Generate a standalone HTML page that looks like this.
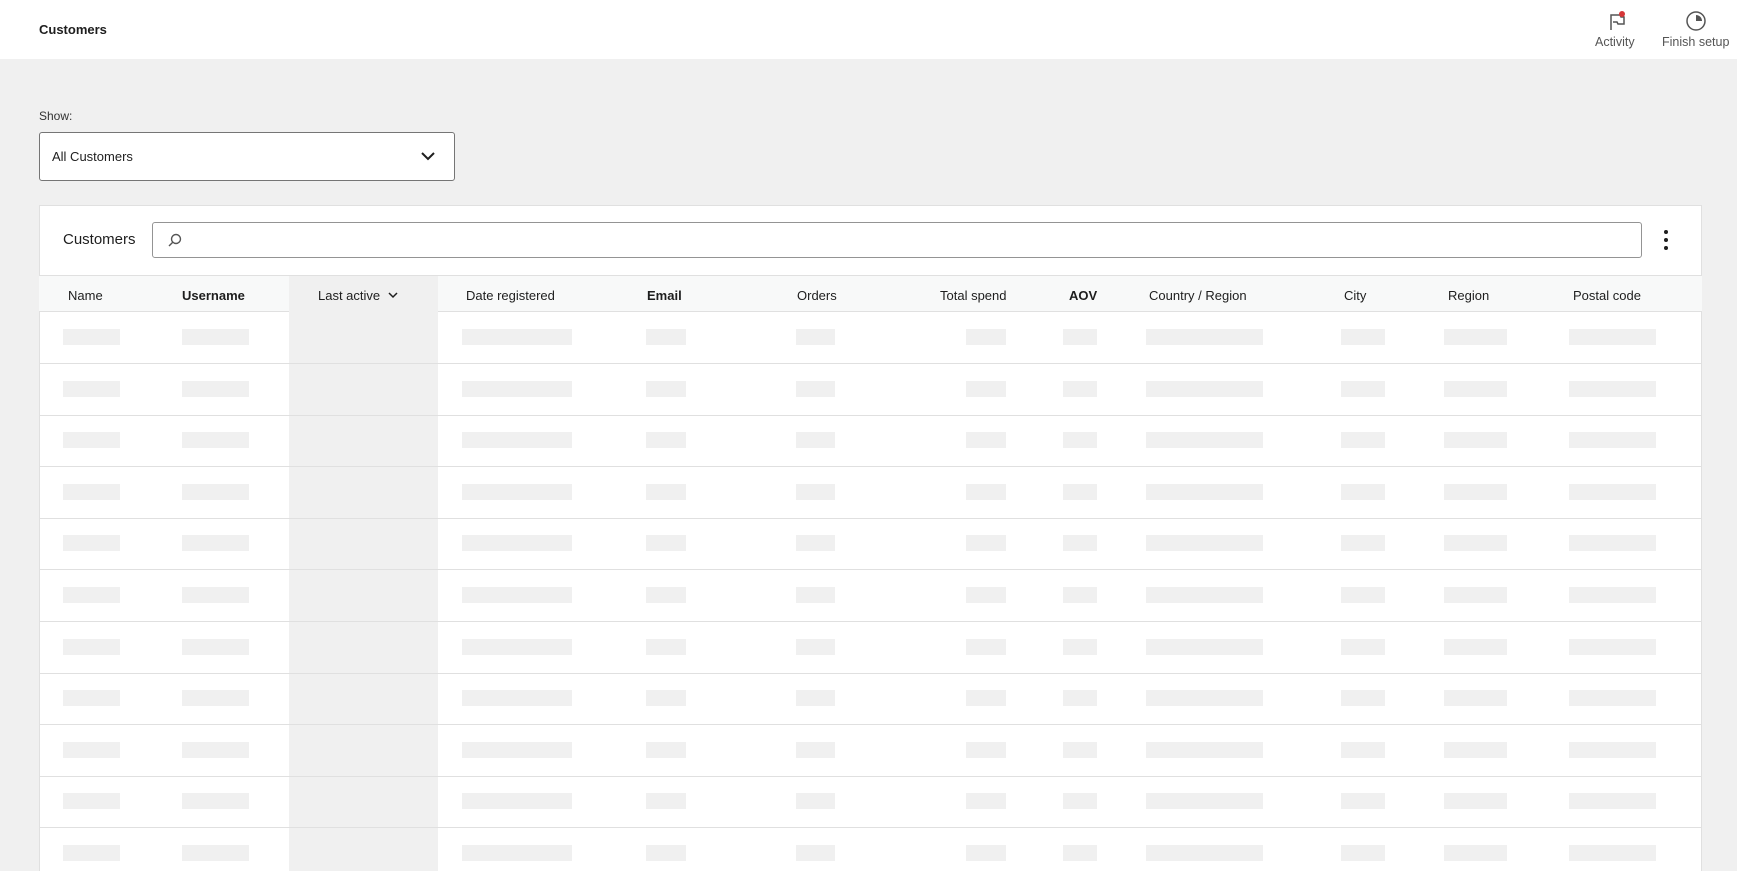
<!DOCTYPE html>
<html style="width:1737px;height:871px;overflow:hidden"><head><style>
*{margin:0;padding:0;box-sizing:border-box}
body{width:1737px;height:871px;overflow:hidden;background:#f0f0f0;font-family:"Liberation Sans",sans-serif;color:#1e1e1e;position:relative}
.top{position:absolute;left:0;top:0;width:1737px;height:59px;background:#fff}
.abs{position:absolute}
.t{font-size:13px;white-space:nowrap}
.card{position:absolute;left:39px;top:205px;width:1663px;height:666px;background:#fff;border:1px solid #e0e0e0;border-bottom:none}
.hdr{position:absolute;left:39px;top:275px;width:1663px;height:37px;background:#f8f9f9;border-top:1px solid #e0e0e0;border-bottom:1px solid #e0e0e0}
.la{position:absolute;left:289px;top:276px;width:149px;height:595px;background:#f0f0f0}
.row{position:absolute;left:40px;width:1661px;height:52px;border-bottom:1px solid #e0e0e0}
.row i{position:absolute;top:17px;height:16px;background:#f0f0f0}
.h{position:absolute;top:288px;font-size:13px;color:#1e1e1e;white-space:nowrap}
.b{font-weight:bold}
</style></head><body>
<div class="top"></div>
<div class="abs t" style="left:39px;top:22px;font-weight:bold;font-size:13px">Customers</div>
<svg class="abs" style="left:1605px;top:10px" width="24" height="24" viewBox="0 0 24 24"><path d="M6 20V5h9l1 2h3v7h-6l-1-2H8" fill="none" stroke="#555" stroke-width="1.5"/><circle cx="17" cy="4" r="3" fill="#d63638"/></svg>
<div class="abs t" style="left:1595px;top:35px;color:#555;font-size:12.5px">Activity</div>
<svg class="abs" style="left:1684px;top:9px" width="24" height="24" viewBox="0 0 24 24"><circle cx="12" cy="12" r="9" fill="none" stroke="#555" stroke-width="1.5"/><path d="M12 6a6 6 0 0 1 6 6h-6z" fill="#555"/></svg>
<div class="abs t" style="left:1662px;top:35px;color:#555;font-size:12.5px">Finish setup</div>

<div class="abs t" style="left:39px;top:109px;font-size:12px;color:#333">Show:</div>
<div class="abs" style="left:39px;top:132px;width:416px;height:49px;background:#fff;border:1px solid #757575;border-radius:3px"></div>
<div class="abs t" style="left:52px;top:149px">All Customers</div>
<svg class="abs" style="left:420px;top:149px" width="16" height="14" viewBox="0 0 16 14"><path d="M2 4l6 6 6-6" fill="none" stroke="#1e1e1e" stroke-width="2"/></svg>

<div class="card"></div>
<div class="abs" style="left:63px;top:231px;font-size:15px;color:#1e1e1e">Customers</div>
<div class="abs" style="left:152px;top:222px;width:1490px;height:36px;border:1px solid #949494;border-radius:3px;background:#fff"></div>
<svg class="abs" style="left:167px;top:232px" width="16" height="16" viewBox="0 0 16 16"><circle cx="9" cy="7" r="4.5" fill="none" stroke="#555" stroke-width="1.4"/><path d="M6 10l-4 4" stroke="#555" stroke-width="1.4"/></svg>
<svg class="abs" style="left:1662px;top:229px" width="8" height="22" viewBox="0 0 8 22"><circle cx="4" cy="3" r="2" fill="#1e1e1e"/><circle cx="4" cy="11" r="2" fill="#1e1e1e"/><circle cx="4" cy="19" r="2" fill="#1e1e1e"/></svg>

<div class="hdr"></div>
<div class="la"></div>
<div class="h" style="left:68px">Name</div>
<div class="h b" style="left:182px">Username</div>
<div class="h" style="left:318px">Last active <svg width="12" height="10" viewBox="0 0 12 10" style="margin-left:3px"><path d="M2 3l4 4 4-4" fill="none" stroke="#1e1e1e" stroke-width="1.5"/></svg></div>
<div class="h" style="left:466px">Date registered</div>
<div class="h b" style="left:647px">Email</div>
<div class="h" style="left:797px">Orders</div>
<div class="h" style="left:940px">Total spend</div>
<div class="h b" style="left:1069px">AOV</div>
<div class="h" style="left:1149px">Country / Region</div>
<div class="h" style="left:1344px">City</div>
<div class="h" style="left:1448px">Region</div>
<div class="h" style="left:1573px">Postal code</div>

<div class="row" style="top:312px"><i style="left:23px;width:57px"></i><i style="left:142px;width:67px"></i><i style="left:422px;width:110px"></i><i style="left:606px;width:40px"></i><i style="left:756px;width:39px"></i><i style="left:926px;width:40px"></i><i style="left:1023px;width:34px"></i><i style="left:1106px;width:117px"></i><i style="left:1301px;width:44px"></i><i style="left:1404px;width:63px"></i><i style="left:1529px;width:87px"></i></div>
<div class="row" style="top:363.6px"><i style="left:23px;width:57px"></i><i style="left:142px;width:67px"></i><i style="left:422px;width:110px"></i><i style="left:606px;width:40px"></i><i style="left:756px;width:39px"></i><i style="left:926px;width:40px"></i><i style="left:1023px;width:34px"></i><i style="left:1106px;width:117px"></i><i style="left:1301px;width:44px"></i><i style="left:1404px;width:63px"></i><i style="left:1529px;width:87px"></i></div>
<div class="row" style="top:415.2px"><i style="left:23px;width:57px"></i><i style="left:142px;width:67px"></i><i style="left:422px;width:110px"></i><i style="left:606px;width:40px"></i><i style="left:756px;width:39px"></i><i style="left:926px;width:40px"></i><i style="left:1023px;width:34px"></i><i style="left:1106px;width:117px"></i><i style="left:1301px;width:44px"></i><i style="left:1404px;width:63px"></i><i style="left:1529px;width:87px"></i></div>
<div class="row" style="top:466.8px"><i style="left:23px;width:57px"></i><i style="left:142px;width:67px"></i><i style="left:422px;width:110px"></i><i style="left:606px;width:40px"></i><i style="left:756px;width:39px"></i><i style="left:926px;width:40px"></i><i style="left:1023px;width:34px"></i><i style="left:1106px;width:117px"></i><i style="left:1301px;width:44px"></i><i style="left:1404px;width:63px"></i><i style="left:1529px;width:87px"></i></div>
<div class="row" style="top:518.4px"><i style="left:23px;width:57px"></i><i style="left:142px;width:67px"></i><i style="left:422px;width:110px"></i><i style="left:606px;width:40px"></i><i style="left:756px;width:39px"></i><i style="left:926px;width:40px"></i><i style="left:1023px;width:34px"></i><i style="left:1106px;width:117px"></i><i style="left:1301px;width:44px"></i><i style="left:1404px;width:63px"></i><i style="left:1529px;width:87px"></i></div>
<div class="row" style="top:570px"><i style="left:23px;width:57px"></i><i style="left:142px;width:67px"></i><i style="left:422px;width:110px"></i><i style="left:606px;width:40px"></i><i style="left:756px;width:39px"></i><i style="left:926px;width:40px"></i><i style="left:1023px;width:34px"></i><i style="left:1106px;width:117px"></i><i style="left:1301px;width:44px"></i><i style="left:1404px;width:63px"></i><i style="left:1529px;width:87px"></i></div>
<div class="row" style="top:621.6px"><i style="left:23px;width:57px"></i><i style="left:142px;width:67px"></i><i style="left:422px;width:110px"></i><i style="left:606px;width:40px"></i><i style="left:756px;width:39px"></i><i style="left:926px;width:40px"></i><i style="left:1023px;width:34px"></i><i style="left:1106px;width:117px"></i><i style="left:1301px;width:44px"></i><i style="left:1404px;width:63px"></i><i style="left:1529px;width:87px"></i></div>
<div class="row" style="top:673.2px"><i style="left:23px;width:57px"></i><i style="left:142px;width:67px"></i><i style="left:422px;width:110px"></i><i style="left:606px;width:40px"></i><i style="left:756px;width:39px"></i><i style="left:926px;width:40px"></i><i style="left:1023px;width:34px"></i><i style="left:1106px;width:117px"></i><i style="left:1301px;width:44px"></i><i style="left:1404px;width:63px"></i><i style="left:1529px;width:87px"></i></div>
<div class="row" style="top:724.8px"><i style="left:23px;width:57px"></i><i style="left:142px;width:67px"></i><i style="left:422px;width:110px"></i><i style="left:606px;width:40px"></i><i style="left:756px;width:39px"></i><i style="left:926px;width:40px"></i><i style="left:1023px;width:34px"></i><i style="left:1106px;width:117px"></i><i style="left:1301px;width:44px"></i><i style="left:1404px;width:63px"></i><i style="left:1529px;width:87px"></i></div>
<div class="row" style="top:776.4px"><i style="left:23px;width:57px"></i><i style="left:142px;width:67px"></i><i style="left:422px;width:110px"></i><i style="left:606px;width:40px"></i><i style="left:756px;width:39px"></i><i style="left:926px;width:40px"></i><i style="left:1023px;width:34px"></i><i style="left:1106px;width:117px"></i><i style="left:1301px;width:44px"></i><i style="left:1404px;width:63px"></i><i style="left:1529px;width:87px"></i></div>
<div class="row" style="top:828px;height:43px;border-bottom:none"><i style="left:23px;width:57px"></i><i style="left:142px;width:67px"></i><i style="left:422px;width:110px"></i><i style="left:606px;width:40px"></i><i style="left:756px;width:39px"></i><i style="left:926px;width:40px"></i><i style="left:1023px;width:34px"></i><i style="left:1106px;width:117px"></i><i style="left:1301px;width:44px"></i><i style="left:1404px;width:63px"></i><i style="left:1529px;width:87px"></i></div>
</body></html>
